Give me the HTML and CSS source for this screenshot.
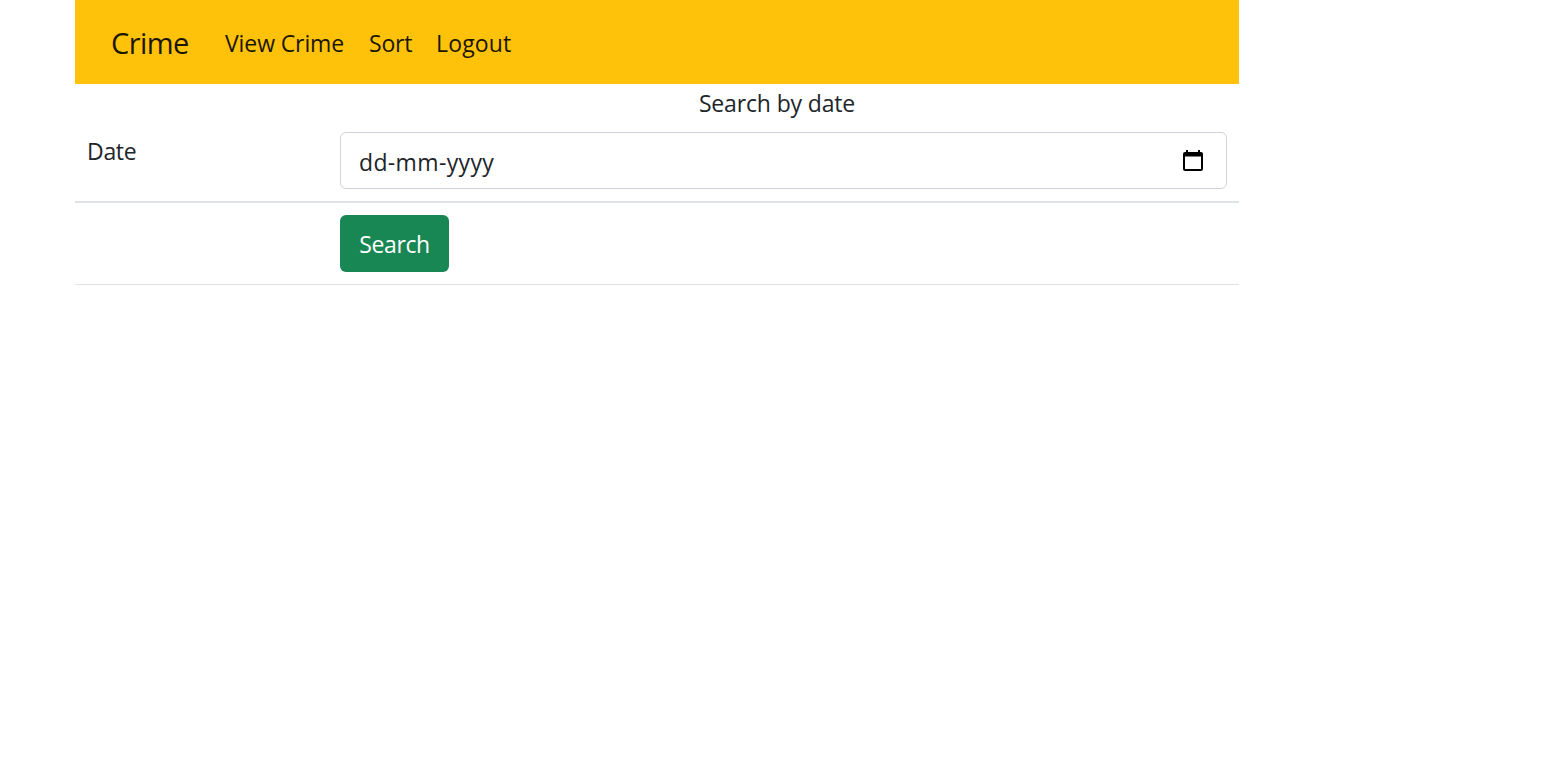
FILE: index.html
```html
<!DOCTYPE html>
<html lang="en">
<head>
<meta charset="utf-8">
<title>Crime</title>
<link rel="stylesheet" href="styles.css">
</head>
<body>
<div class="container">
  <nav class="navbar">
    <a class="brand">Crime</a>
    <a class="nav-link link-view">View Crime</a>
    <a class="nav-link link-sort">Sort</a>
    <a class="nav-link link-logout">Logout</a>
  </nav>
  <div class="caption"><span class="caption-text">Search by date</span></div>
  <form class="table">
    <div class="row row-date">
      <div class="label"><span class="label-text">Date</span></div>
      <div class="cell">
        <div class="date-input">
          <span class="date-text">dd-mm-yyyy</span>
          <svg class="calendar" width="20" height="22" viewBox="0 0 20 22">
            <path fill="#000" fill-rule="evenodd" d="M3 0H5V2H15V0H17V2H18Q20 2 20 4V19Q20 21 18 21H2Q0 21 0 19V4Q0 2 2 2H3ZM2 6.5V19H18V6.5Z"/>
          </svg>
        </div>
      </div>
    </div>
    <div class="row row-submit">
      <div class="label"></div>
      <div class="cell"><button class="btn" type="button">Search</button></div>
    </div>
  </form>
</div>
</body>
</html>
```
FILE: styles.css
```css
* { box-sizing: border-box; }
body {
  margin: 0;
  background: #fff;
  color: #212529;
  font-family: "Open Sans", "Noto Sans", sans-serif;
  font-size: 23px;
  line-height: 36px;
}
.container { width: 1164px; margin-left: 75px; }
.navbar {
  display: flex;
  align-items: center;
  height: 84px;
  padding: 1px 36px 0;
  background: #ffc20a;
  color: #1a1600;
}
.brand { width: 114px; font-size: 29px; letter-spacing: -0.6px; white-space: nowrap; }
.nav-link { white-space: nowrap; }
.link-view { width: 144px; letter-spacing: -0.1px; }
.link-sort { width: 67px; letter-spacing: -0.2px; }
.link-logout { letter-spacing: 0.15px; }
.caption { height: 36px; padding: 1px 0 0 240px; text-align: center; letter-spacing: -0.15px; }
.row { display: flex; border-bottom: 1px solid #dee2e6; }
.row-date { height: 83px; border-bottom-width: 2px; }
.row-submit { height: 82px; }
.label { width: 253px; padding: 13px 12px; letter-spacing: -0.3px; }
.cell { flex: 1; padding: 12px; }
.date-input {
  display: flex;
  align-items: center;
  justify-content: space-between;
  height: 57px;
  padding: 3px 23px 0 18px;
  border: 1px solid #ced4da;
  border-radius: 6px;
}
.date-text { letter-spacing: 0.35px; }
.calendar { display: block; margin-top: -3px; }
.btn {
  display: block;
  width: 109px;
  height: 57px;
  padding: 1px 0 0;
  border: 0;
  border-radius: 6px;
  background: #198754;
  color: #fff;
  font: inherit;
  letter-spacing: -0.4px;
}
```
